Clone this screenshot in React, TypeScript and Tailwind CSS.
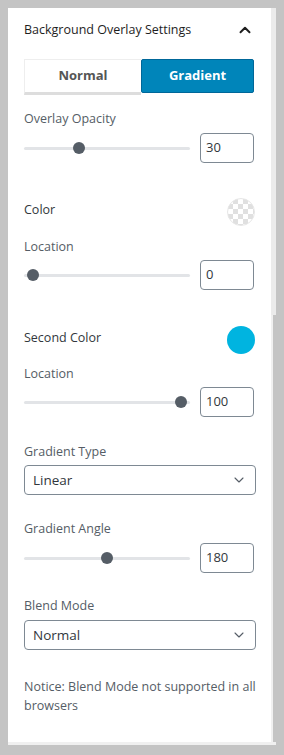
import { ChevronDown, ChevronUp } from "lucide-react";

const font = { fontFamily: '"Open Sans", "Noto Sans", sans-serif' };

const Slider = ({ pos }: { pos: number }) => {
  // pos is 0..1 along the usable track
  return (
    <div className="relative w-[166px] h-[12px] flex items-center">
      <div className="w-full h-[3px] bg-[#e2e4e7] rounded-full" />
      <span
        className="absolute top-0 size-[12px] rounded-full bg-[#555d66]"
        style={{ left: `${pos * 154}px` }}
      />
    </div>
  );
};

const RangeRow = ({ pos, value, className }: { pos: number; value: string; className?: string }) => (
  <div className={`flex items-center gap-[10px] ${className ?? ""}`}>
    <Slider pos={pos} />
    <div className="w-[54px] h-[30px] border border-[#7e8993] rounded-[4px] flex items-center px-[5px] text-[13px] text-[#32373c]">
      {value}
    </div>
  </div>
);

const Label = ({ children, className }: { children: React.ReactNode; className?: string }) => (
  <p className={`text-[12.5px] leading-[18px] text-[#555d66] ${className ?? ""}`}>{children}</p>
);

const SelectBox = ({ value, className }: { value: string; className?: string }) => (
  <div
    className={`w-[232px] h-[30px] border border-[#7e8993] rounded-[4px] flex items-center justify-between pl-[8px] pr-[8px] text-[13.5px] text-[#32373c] ${className ?? ""}`}
  >
    <span>{value}</span>
    <ChevronDown size={16} strokeWidth={1.6} className="text-[#555d66]" />
  </div>
);

export default function App() {
  return (
    <div className="w-[284px] h-[755px] bg-[#c4c4c4] pt-2 pl-2" style={font}>
      <div className="w-[268px] h-[737px] flex flex-col bg-[#f0f0f0]">
        <div className="flex flex-row h-[734px]">
          {/* panel */}
          <div className="w-[263px] h-full bg-white pl-4 pr-[15px]">
            <div className="h-[44px] flex items-center justify-between pr-[2px]">
              <h2 className="text-[12.5px] font-medium text-[#1e1e1e]">Background Overlay Settings</h2>
              <ChevronUp size={18} strokeWidth={2.6} className="text-[#1e1e1e]" />
            </div>

            {/* tabs */}
            <div className="mt-[7px] flex w-[230px] h-[36px]">
              <button className="w-[117px] h-full bg-white border-t border-l border-[#eeeeee] border-b-[3px] border-b-[#dddddd] text-[13px] font-bold text-[#555555]">
                Normal
              </button>
              <button className="w-[113px] h-[34px] bg-[#0085ba] border border-[#006799] rounded-[2px] text-[13px] font-bold text-white">
                Gradient
              </button>
            </div>

            <Label className="mt-[15px]">Overlay Opacity</Label>
            <RangeRow pos={0.32} value="30" className="mt-[5px]" />

            <div className="mt-[35px] flex items-center justify-between h-[28px]">
              <span className="text-[12.5px] font-medium text-[#32373c] -mt-[4px]">Color</span>
              <span
                className="size-[28px] rounded-full border border-[#e6e6e6] mr-[1px]"
                style={{
                  backgroundColor: "#ffffff",
                  backgroundImage:
                    "linear-gradient(45deg, #e0e0e0 25%, transparent 25%, transparent 75%, #e0e0e0 75%), linear-gradient(45deg, #e0e0e0 25%, transparent 25%, transparent 75%, #e0e0e0 75%)",
                  backgroundSize: "10px 10px",
                  backgroundPosition: "0 0, 5px 5px",
                }}
              />
            </div>
            <Label className="mt-[12px]">Location</Label>
            <RangeRow pos={0.02} value="0" className="mt-[4px]" />

            <div className="mt-[36px] flex items-center justify-between h-[28px]">
              <span className="text-[12.5px] font-medium text-[#32373c] -mt-[4px]">Second Color</span>
              <span className="size-[28px] rounded-full bg-[#00b4e0] mr-[1px]" />
            </div>
            <Label className="mt-[11px]">Location</Label>
            <RangeRow pos={0.98} value="100" className="mt-[4px]" />

            <Label className="mt-[26px]">Gradient Type</Label>
            <SelectBox value="Linear" className="mt-[4px]" />

            <Label className="mt-[25px]">Gradient Angle</Label>
            <RangeRow pos={0.5} value="180" className="mt-[5px]" />

            <Label className="mt-[24px]">Blend Mode</Label>
            <SelectBox value="Normal" className="mt-[5px]" />

            <p className="mt-[27px] text-[12.5px] leading-[19px] text-[#555d66]">
              Notice: Blend Mode not supported in all browsers
            </p>
          </div>
          {/* scrollbar */}
          <div className="w-[5px] h-full flex flex-col">
            <div className="h-[307px] bg-[#ebebeb]" />
            <div className="flex-1 flex flex-row">
              <div className="w-[2px] bg-[#f0f0f0]" />
              <div className="flex-1 bg-[#c4c4c4]" />
            </div>
          </div>
        </div>
      </div>
    </div>
  );
}
